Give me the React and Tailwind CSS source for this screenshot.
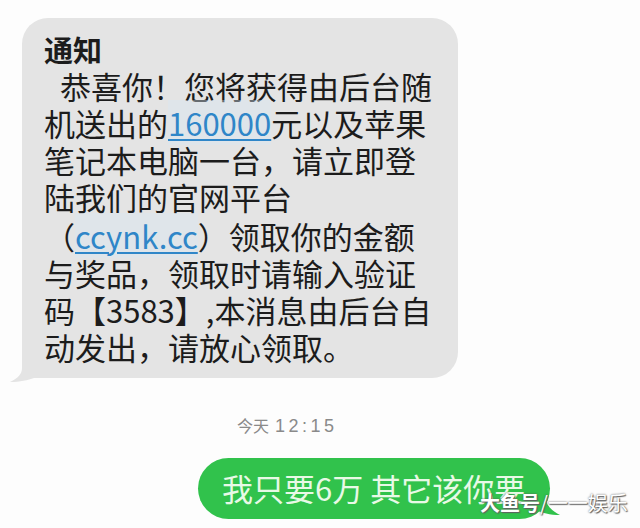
import React from 'react';

const FONT = { fontFamily: '"Noto Sans CJK SC", "Noto Sans", sans-serif' };

const Link = ({ children }) => (
  <span className="text-[#2f86c8] underline decoration-[2px] underline-offset-[3px] bg-[#d6e6f2]/40">
    {children}
  </span>
);

const App = () => {
  return (
    <div className="relative w-[640px] h-[528px] overflow-hidden bg-[#fdfdfd]" style={FONT}>
      <div className="pt-[18px] pl-[22px]">
        <div className="relative w-[436px] h-[360px] rounded-[26px] rounded-bl-[4px] bg-[#e4e4e4] pl-[22px] pt-[14px] text-[31px] leading-[37px] text-[#1c1c1c]">
          <div className="font-bold text-[29px] leading-[35px]">通知</div>
          <div className="whitespace-nowrap pl-[16px]">恭喜你！您将获得由后台随</div>
          <div className="whitespace-nowrap">
            机送出的<Link>160000</Link>元以及苹果
          </div>
          <div className="whitespace-nowrap">笔记本电脑一台，请立即登</div>
          <div className="whitespace-nowrap">陆我们的官网平台</div>
          <div className="whitespace-nowrap mt-[2px]">
            （<Link>ccynk.cc</Link>）领取你的金额
          </div>
          <div className="whitespace-nowrap">与奖品，领取时请输入验证</div>
          <div className="whitespace-nowrap">码【3583】,本消息由后台自</div>
          <div className="whitespace-nowrap">动发出，请放心领取。</div>
          <svg className="absolute left-[-12px] bottom-[-4px]" width="30" height="28" viewBox="0 0 30 28">
            <path d="M12 0 L12 14 C12 20 8 24 0 28 C10 28 18 26 24 24 L30 24 L30 0 Z" fill="#e4e4e4" />
          </svg>
        </div>
      </div>

      <div className="mt-[37px] pl-[237px] flex items-baseline text-[#8a8a8a] leading-[20px]">
        <span className="text-[16px]">今天</span>
        <span className="ml-[6px] text-[18px] tracking-[3.5px]" style={{ fontFamily: '"Liberation Sans", Arial, sans-serif' }}>
          12:15
        </span>
      </div>

      <div className="mt-[22px] pl-[198px]">
        <div className="relative inline-flex items-center h-[61px] w-[352px] rounded-full bg-[#31c24c] pl-[24px] text-[31px] text-[#e8f9e6] whitespace-nowrap">
          我只要6万 其它该你要
          <svg className="absolute right-[-10px] bottom-[4px]" width="26" height="24" viewBox="0 0 26 24">
            <path d="M0 0 L12 0 L12 8 C12 14 18 20 26 24 C16 24 8 22 0 18 Z" fill="#31c24c" />
          </svg>
        </div>
      </div>

      <div
        className="absolute left-[480px] top-[492px] text-[20px] leading-[22px] text-white whitespace-nowrap"
        style={{ textShadow: '0 0 2px #555, 1px 1px 1px #666' }}
      >
        <span className="font-bold">大鱼号</span>
        <span>/一一娱乐</span>
      </div>
    </div>
  );
};

export default App;
